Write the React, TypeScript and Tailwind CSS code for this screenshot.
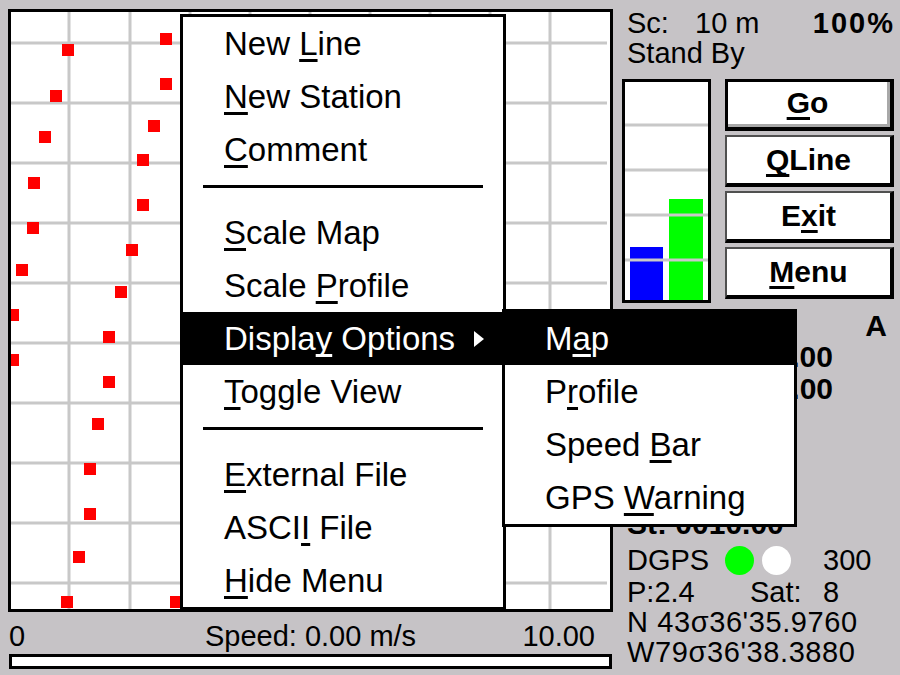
import React from "react";

type MenuEntry =
  | { kind: "item"; label: string; at: number; active?: boolean; submenu?: boolean }
  | { kind: "sep" };

const mainMenu: MenuEntry[] = [
  { kind: "item", label: "New Line", at: 4 },
  { kind: "item", label: "New Station", at: 0 },
  { kind: "item", label: "Comment", at: 0 },
  { kind: "sep" },
  { kind: "item", label: "Scale Map", at: 0 },
  { kind: "item", label: "Scale Profile", at: 6 },
  { kind: "item", label: "Display Options", at: 6, active: true, submenu: true },
  { kind: "item", label: "Toggle View", at: 0 },
  { kind: "sep" },
  { kind: "item", label: "External File", at: 0 },
  { kind: "item", label: "ASCII File", at: 4 },
  { kind: "item", label: "Hide Menu", at: 0 },
];

const displayMenu = [
  { label: "Map", at: 1, active: true },
  { label: "Profile", at: 1 },
  { label: "Speed Bar", at: 6 },
  { label: "GPS Warning", at: 4 },
];

// track points, page coordinates of each marker centre
const points: [number, number][] = [
  [68, 50], [56, 96], [45, 137], [34, 183], [33, 228], [22, 270], [13, 315], [13, 360],
  [166, 39], [166, 84], [154, 126], [143, 160], [143, 205], [132, 250], [121, 292],
  [109, 337], [109, 382], [98, 424], [90, 469], [90, 514], [79, 557], [67, 602], [176, 602],
];

const gridX = [69, 130, 190, 250, 310, 370, 430, 490, 550];
const gridY = [43, 103, 163, 223, 283, 343, 403, 463, 523, 583];

// label with its access key underlined
function Mnemonic({ text, at }: { text: string; at: number }) {
  return (
    <span className="whitespace-pre">
      {text.slice(0, at)}
      <span className="underline decoration-[3px] underline-offset-[4px] [text-decoration-skip-ink:none]">
        {text[at]}
      </span>
      {text.slice(at + 1)}
    </span>
  );
}

function MapView() {
  return (
    <div className="h-[603px] w-[605px] border-[3px] border-black bg-white">
      <svg width={599} height={597} viewBox="11 12 599 597" className="block">
        {gridY.map((y) => (
          <line key={`h${y}`} x1={11} x2={607} y1={y} y2={y} stroke="#c8c8c8" strokeWidth={3} />
        ))}
        {gridX.map((x) => (
          <line key={`v${x}`} x1={x} x2={x} y1={12} y2={609} stroke="#c8c8c8" strokeWidth={3} />
        ))}
        {points.map(([x, y]) => (
          <rect key={`${x}-${y}`} x={x - 6} y={y - 6} width={12} height={12} fill="#ff0000" />
        ))}
      </svg>
    </div>
  );
}

function SignalGauge() {
  return (
    <div className="h-[224px] w-[89px] border-[3px] border-black bg-white">
      <svg width={83} height={218} className="block">
        <rect x={5} y={165} width={33} height={53} fill="#0000ff" />
        <rect x={44} y={117} width={34} height={101} fill="#00ff00" />
        {[43, 88, 133, 178].map((y) => (
          <line key={y} x1={0} x2={83} y1={y} y2={y} stroke="#c8c8c8" strokeWidth={3} />
        ))}
      </svg>
    </div>
  );
}

function SoftButton({ label, at, primary }: { label: string; at: number; primary?: boolean }) {
  if (primary) {
    return (
      <div className="h-[52px] border-[3px] border-r-[4px] border-b-[4px] border-black">
        <div className="flex h-full items-center justify-center border-r-[3px] border-b-[3px] border-[#a8a8a8] bg-white text-[30px] font-bold leading-none">
          <Mnemonic text={label} at={at} />
        </div>
      </div>
    );
  }
  return (
    <div className="flex h-[52px] items-center justify-center border-t-2 border-l-2 border-r-[4px] border-b-[4px] border-t-[#505050] border-l-[#505050] border-r-black border-b-black bg-white text-[30px] font-bold leading-none">
      <Mnemonic text={label} at={at} />
    </div>
  );
}

function PopupMenu() {
  return (
    <div className="absolute left-[180px] top-[14px] flex h-[596px] w-[326px] flex-col border-[3px] border-black bg-white text-[33px] leading-none">
      {mainMenu.map((entry, i) =>
        entry.kind === "sep" ? (
          <div key={i} className="h-[30px] px-[20px] pt-[9px]">
            <div className="h-[3px] bg-black" />
          </div>
        ) : entry.active ? (
          <div
            key={i}
            className="relative -mx-[3px] flex h-[53px] shrink-0 items-center bg-black pl-[44px] text-white"
          >
            <Mnemonic text={entry.label} at={entry.at} />
            {entry.submenu && (
              <svg width={10} height={16} className="absolute right-[22px] top-[19px]">
                <polygon points="0,0 10,8 0,16" fill="#ffffff" />
              </svg>
            )}
          </div>
        ) : (
          <div key={i} className="flex h-[53px] shrink-0 items-center pl-[41px]">
            <Mnemonic text={entry.label} at={entry.at} />
          </div>
        )
      )}
    </div>
  );
}

function SubMenu() {
  return (
    <div className="absolute left-[502px] top-[309px] flex w-[295px] flex-col border-[3px] border-black bg-white text-[33px] leading-none">
      {displayMenu.map((m) => (
        <div
          key={m.label}
          className={
            m.active
              ? "-mx-[3px] -mt-[3px] flex h-[56px] items-center bg-black pl-[43px] pt-[3px] text-white"
              : "flex h-[53px] items-center pl-[40px]"
          }
        >
          <Mnemonic text={m.label} at={m.at} />
        </div>
      ))}
    </div>
  );
}

export default function App() {
  return (
    <div className="relative flex h-[675px] w-[900px] overflow-hidden bg-[#c6c3c6] font-['Liberation_Sans',Arial,sans-serif] text-black">
      <div className="flex w-[613px] flex-col pl-[8px] pt-[9px]">
        <MapView />
        <div className="grid h-[42px] grid-cols-[1fr_auto_1fr] pt-[6px] text-[29px] leading-[36px]">
          <span className="pl-[1px]">0</span>
          <span>Speed: 0.00 m/s</span>
          <span className="pr-[18px] text-right">10.00</span>
        </div>
        <div className="ml-[1px] h-[15px] w-[603px] border-[3px] border-black bg-white" />
      </div>

      <div className="flex w-[287px] flex-col pl-[14px] pr-[5px] pt-[8px] text-[29px]">
        <div className="flex h-[30px] items-center justify-between leading-[30px]">
          <div className="flex">
            <span className="w-[68px]">Sc:</span>
            <span>10 m</span>
          </div>
          <span className="font-bold tracking-[2px]">100%</span>
        </div>
        <div className="h-[30px] leading-[30px]">Stand By</div>

        <div className="-ml-[5px] mt-[11px] flex h-[224px]">
          <SignalGauge />
          <div className="ml-[14px] flex w-[169px] flex-col gap-[4px]">
            <SoftButton label="Go" at={0} primary />
            <SoftButton label="QLine" at={0} />
            <SoftButton label="Exit" at={1} />
            <SoftButton label="Menu" at={0} />
          </div>
        </div>

        <div className="mt-[7px] flex h-[31px] items-center justify-between pr-[8px] text-[30px] font-bold leading-[31px]">
          <span>L: 1001</span>
          <span>A</span>
        </div>
        <div className="h-[31px] w-[206px] text-right text-[30px] font-bold leading-[31px]">E: 612345.00</div>
        <div className="h-[33px] w-[206px] text-right text-[30px] font-bold leading-[33px]">N:4834567.00</div>
        <div className="h-[103px]" />
        <div className="h-[32px] text-[30px] font-bold leading-[32px]">St: 0010.00</div>

        <div className="mt-[4px] flex h-[32px] items-center leading-[32px]">
          <span className="w-[98px]">DGPS</span>
          <span className="h-[29px] w-[29px] rounded-full bg-[#00ff00]" />
          <span className="ml-[8px] h-[29px] w-[29px] rounded-full bg-white" />
          <span className="ml-[32px]">300</span>
        </div>
        <div className="flex h-[32px] leading-[32px]">
          <span className="w-[123px]">P:2.4</span>
          <span className="w-[73px]">Sat:</span>
          <span>8</span>
        </div>
        <div className="h-[29px] tracking-[0.6px] leading-[29px]">N 43σ36'35.9760</div>
        <div className="h-[30px] tracking-[0.6px] leading-[30px]">W79σ36'38.3880</div>
      </div>

      <PopupMenu />
      <SubMenu />
    </div>
  );
}
